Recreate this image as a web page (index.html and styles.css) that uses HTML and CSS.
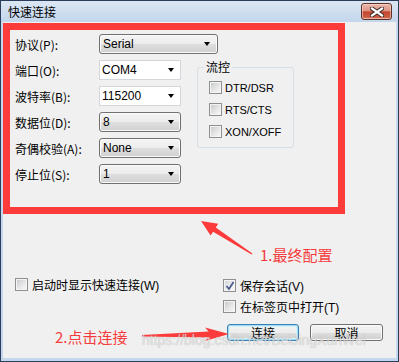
FILE: index.html
```html
<!DOCTYPE html>
<html lang="zh">
<head>
<meta charset="utf-8">
<title>快速连接</title>
<link rel="stylesheet" href="styles.css">
</head>
<body>
<div class="window">
  <div class="titlebar">
    <span class="title">快速连接</span>
    <span class="close">
      <svg width="14" height="10" viewBox="0 0 14 10">
        <path d="M2 1.5 L12 8.5 M12 1.5 L2 8.5" stroke="#3a2a2a" stroke-width="4.2" stroke-linecap="square" fill="none"/>
        <path d="M2 1.5 L12 8.5 M12 1.5 L2 8.5" stroke="#ffffff" stroke-width="2.2" stroke-linecap="square" fill="none"/>
      </svg>
    </span>
  </div>
  <div class="client">
    <div class="redbox">
      <div class="row">
        <span class="lbl">协议(P):</span>
        <div class="sel gray wide"><span class="val">Serial</span><i class="arr"></i></div>
      </div>
      <div class="lower">
        <div class="col">
          <div class="row"><span class="lbl">端口(O):</span><div class="sel white"><span class="val">COM4</span><i class="arr"></i></div></div>
          <div class="row"><span class="lbl">波特率(B):</span><div class="sel white"><span class="val">115200</span><i class="arr"></i></div></div>
          <div class="row"><span class="lbl">数据位(D):</span><div class="sel gray"><span class="val">8</span><i class="arr"></i></div></div>
          <div class="row"><span class="lbl">奇偶校验(A):</span><div class="sel gray"><span class="val">None</span><i class="arr"></i></div></div>
          <div class="row"><span class="lbl">停止位(S):</span><div class="sel gray"><span class="val">1</span><i class="arr"></i></div></div>
        </div>
        <fieldset class="group">
          <legend>流控</legend>
          <div class="chk first"><span class="box"></span><span class="latin">DTR/DSR</span></div>
          <div class="chk"><span class="box"></span><span class="latin">RTS/CTS</span></div>
          <div class="chk"><span class="box"></span><span class="latin">XON/XOFF</span></div>
        </fieldset>
      </div>
    </div>
    <div class="options">
      <div class="optcol left">
        <div class="chk"><span class="box"></span>启动时显示快速连接(W)</div>
      </div>
      <div class="optcol right">
        <div class="chk"><span class="box checked"><svg width="10" height="10" viewBox="0 0 10 10"><path d="M1.5 5 L4 8 L8.5 1" stroke="#4a5f8e" stroke-width="1.8" fill="none"/></svg></span>保存会话(V)</div>
        <div class="chk"><span class="box"></span>在标签页中打开(T)</div>
      </div>
    </div>
    <div class="buttons">
      <button class="btn default">连接</button>
      <button class="btn">取消</button>
    </div>
  </div>

  <svg class="arrows" width="399" height="362" viewBox="0 0 399 362">
    <polygon fill="#fb3b3b" points="201,221 218.2,223.8 215.8,227.6 252.4,253.6 251.6,254.4 213.1,231.8 210.6,235.6"/>
    <polygon fill="#fb3b3b" points="229,334 205,327.5 208.5,331.5 142,335 142,336.5 208.5,337.5 205,341"/>
  </svg>
  <div class="note note1">1.最终配置</div>
  <div class="note note2">2.点击连接</div>
  <div class="watermark">https://blog.csdn.net/BeiJingXunWei</div>
</div>
</body>
</html>
```

FILE: styles.css
```css
html, body {
  margin: 0;
  padding: 0;
  background: #ffffff;
}

body {
  font-family: "Liberation Sans", "Noto Sans CJK SC", sans-serif;
  font-size: 12px;
  color: #000;
}

.window {
  position: relative;
  width: 399px;
  height: 362px;
  box-sizing: border-box;
  border: 1px solid #2a3d5a;
  background: #c4d7ec;
  padding: 0 2px 3px 2px;
  display: flex;
  flex-direction: column;
  overflow: hidden;
}

.titlebar {
  height: 21px;
  margin: 0 -2px;
  padding: 0 6px 0 7px;
  display: flex;
  justify-content: space-between;
  align-items: flex-start;
  background: linear-gradient(#dbe6f3, #c3d6ec);
}

.title {
  font-family: "Noto Sans CJK SC", sans-serif;
  font-size: 12px;
  line-height: 14px;
  margin-top: 4px;
}

.close {
  margin-top: 2px;
  width: 31px;
  height: 17px;
  box-sizing: border-box;
  border: 1px solid #5e3128;
  border-radius: 3px;
  background: linear-gradient(#eab8ac 0%, #de9585 45%, #c4472f 52%, #c85a41 85%, #d9826b 100%);
  box-shadow: inset 0 0 0 1px rgba(255, 230, 220, 0.5);
  display: flex;
  align-items: center;
  justify-content: center;
}

.client {
  flex: 1;
  background: #f0f0f0;
  display: flex;
  flex-direction: column;
}

.redbox {
  margin-top: 1px;
  width: 342px;
  height: 191px;
  box-sizing: border-box;
  border: 7px solid #fc3b3b;
  padding: 4px 0 0 5px;
}

.row {
  display: flex;
  align-items: center;
  height: 20px;
}

.lbl {
  width: 84px;
  font-family: "Noto Sans CJK SC", sans-serif;
  font-size: 12px;
  white-space: nowrap;
}

.sel {
  width: 82px;
  height: 20px;
  box-sizing: border-box;
  display: flex;
  align-items: center;
  padding-left: 3px;
  font-size: 12px;
}

.sel.wide {
  width: 119px;
}

.sel.gray {
  border: 1px solid #707070;
  border-radius: 3px;
  background: linear-gradient(#f4f4f4 0%, #ececec 50%, #dedede 52%, #d0d0d0 100%);
  box-shadow: inset 0 0 0 1px #fbfbfb;
}

.sel.white {
  border: 1px solid #d3d7dc;
  background: #ffffff;
  padding-left: 2px;
}

.val {
  flex: 1;
}

.arr {
  width: 0;
  height: 0;
  border-left: 3.5px solid transparent;
  border-right: 3.5px solid transparent;
  border-top: 4px solid #000;
  margin-right: 6px;
}

.sel.wide .arr {
  margin-right: 7px;
}

.lower {
  display: flex;
  margin-top: 6px;
}

.col {
  display: flex;
  flex-direction: column;
  gap: 6px;
}

.group {
  margin: 0 0 0 16px;
  padding: 0 0 0 6px;
  width: 97px;
  height: 88px;
  box-sizing: border-box;
  border: 1px solid #d5dfe5;
  border-radius: 3px;
}

.group legend {
  padding: 0 2px;
  font-family: "Noto Sans CJK SC", sans-serif;
  font-size: 12px;
  line-height: 14px;
}

.chk {
  display: flex;
  align-items: center;
  gap: 4px;
  height: 13px;
  font-family: "Liberation Sans", "Noto Sans CJK SC", sans-serif;
  font-size: 12px;
  white-space: nowrap;
}

.group .chk {
  margin: 9px 0 0 5px;
  gap: 3px;
}

.group .chk.first {
  margin-top: 7px;
}

.latin {
  font-size: 11px;
}

.box {
  width: 13px;
  height: 13px;
  box-sizing: border-box;
  flex: none;
  border: 1px solid #8e8f8f;
  background: linear-gradient(135deg, #c4c6c9 0%, #e6e6e7 55%, #fbfbfb 100%);
  box-shadow: inset 0 0 0 1px #f4f4f4;
  display: flex;
  align-items: center;
  justify-content: center;
}

.box.checked {
  background: linear-gradient(135deg, #d0d2d5 0%, #ececed 55%, #fdfdfd 100%);
}

.options {
  display: flex;
  padding-top: 64px;
}

.optcol {
  display: flex;
  flex-direction: column;
}

.optcol.left {
  width: 208px;
  padding-left: 12px;
}

.optcol.right {
  margin-top: 1px;
  gap: 8px;
}

.buttons {
  display: flex;
  gap: 11px;
  margin-top: 11px;
  padding-left: 224px;
}

.btn {
  width: 73px;
  height: 17px;
  padding: 0;
  box-sizing: border-box;
  font-family: "Noto Sans CJK SC", sans-serif;
  font-size: 12px;
  line-height: 14px;
  color: #000;
  border: 1px solid #707070;
  border-radius: 3px;
  background: linear-gradient(#f4f4f4 0%, #ececec 50%, #dedede 52%, #d0d0d0 100%);
  box-shadow: inset 0 0 0 1px #fbfbfb;
}

.btn.default {
  width: 72px;
  border-color: #3c7fb1;
  box-shadow: inset 0 0 0 1px #9fdcf5, inset 0 0 0 2px #d8f0fa;
}

.arrows {
  position: absolute;
  left: -1px;
  top: -1px;
  pointer-events: none;
}

.note {
  position: absolute;
  font-family: "Noto Sans CJK SC", sans-serif;
  font-size: 15px;
  line-height: 18px;
  color: #f43c3c;
  white-space: nowrap;
}

.note1 {
  left: 259px;
  top: 245px;
}

.note2 {
  left: 54px;
  top: 327px;
}

.watermark {
  position: absolute;
  left: 141px;
  top: 331px;
  font-family: "Liberation Sans", sans-serif;
  font-size: 14px;
  line-height: 16px;
  color: rgba(235, 235, 235, 0.7);
  text-shadow: 0 0 1px rgba(120, 120, 120, 0.45);
  white-space: nowrap;
  pointer-events: none;
}
```
